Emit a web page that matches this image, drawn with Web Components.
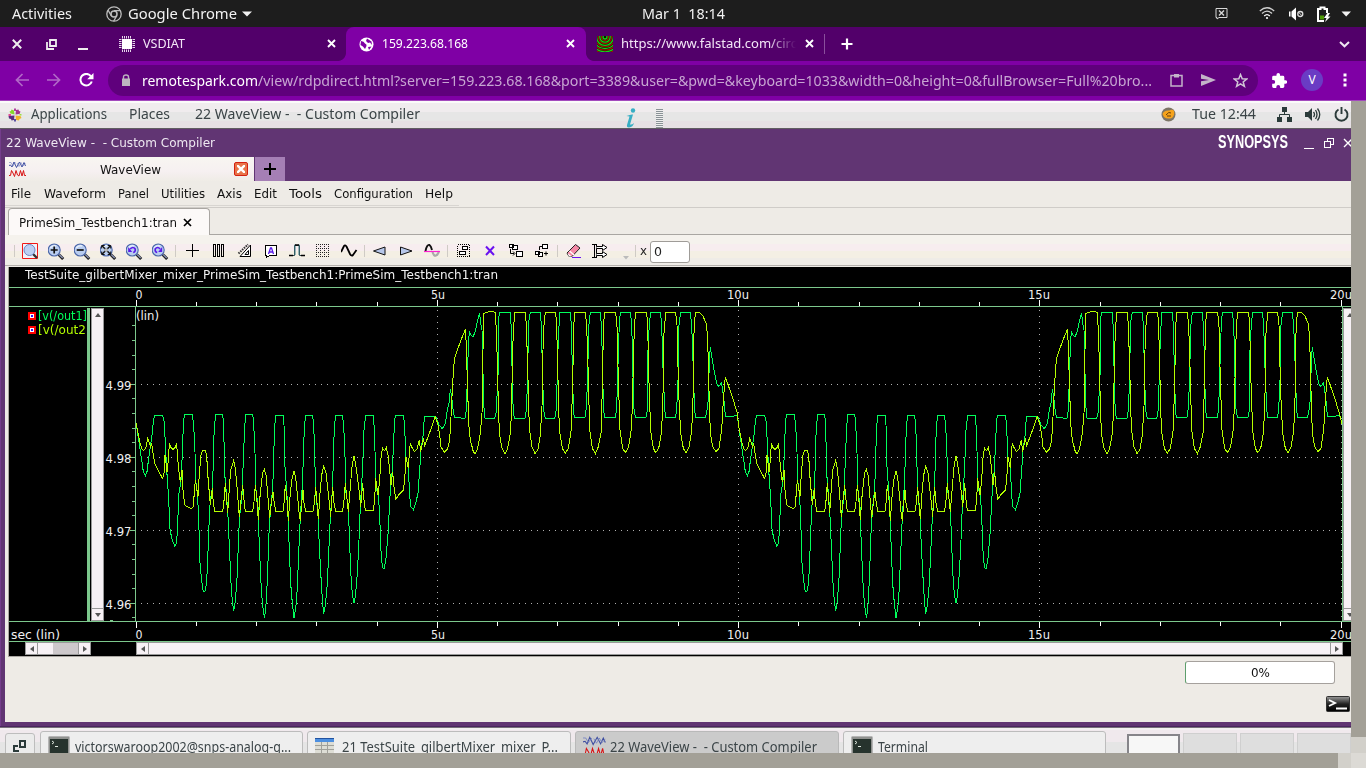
<!DOCTYPE html>
<html lang="en">
<head>
<meta charset="utf-8">
<title>WaveView - Custom Compiler</title>
<style>
html,body{margin:0;padding:0;width:1366px;height:768px;overflow:hidden;background:#a3a097}
body{font-family:"Noto Sans",sans-serif}
</style>
</head>
<body>
<desktop-shell></desktop-shell>
<script>
const define = (name, html, after) => customElements.define(name, class extends HTMLElement {
  connectedCallback() {
    if (this.shadowRoot) return;
    const root = this.attachShadow({mode: 'open'});
    root.innerHTML = '<style>*{box-sizing:border-box}svg{display:block;flex:none}</style>' + (typeof html === 'function' ? html(this) : html);
    if (after) after(this, root);
  }
});

/* Text set to an exact advance width */
define('fit-text', el => `<style>:host{display:inline-block;flex:none;white-space:pre;width:${el.getAttribute('w')}px}
span{display:inline-block;transform-origin:0 50%}</style><span><slot></slot></span>`, (el, root) => {
  const s = root.querySelector('span'), n = s.getBoundingClientRect().width;
  if (n) s.style.transform = `scaleX(${(+el.getAttribute('w') / n).toFixed(4)})`;
});

define('gnome-bar', `<style>
:host{display:flex;height:27px;background:#1d1d1d;color:#f2f2f2;font-size:14.6px;line-height:27px;align-items:center;padding-left:12px}
fit-text{height:27px}
</style>
<fit-text w="60">Activities</fit-text>
<svg width="16" height="16" viewBox="0 0 16 16" style="margin-left:34px" fill="none" stroke="#bdbdbd"><circle cx="8" cy="8" r="7.2" stroke-width="1.3"/><circle cx="8" cy="8" r="3" stroke-width="1.5"/><path d="M8 4.6H14.4M5.2 9.6 2 4M10.8 9.6 7.6 15.2" stroke-width="1.3"/></svg>
<fit-text w="109" style="margin-left:6px">Google Chrome</fit-text>
<svg width="10" height="6" style="margin-left:5px"><path d="M0 .5H10L5 5.5Z" fill="#f2f2f2"/></svg>
<fit-text w="83" style="margin-left:390px">Mar 1  18:14</fit-text>
<svg width="13" height="13" style="margin-left:490px" fill="none" stroke="#d8d8d8"><path d="M1 1.5H12V10.5H4L2 12V10.5H1Z"/><path d="M4 3.5 9 8.500M9 3.500 4 8.500" stroke-width="1.4"/></svg>
<svg width="16" height="13" style="margin-left:31px" fill="none" stroke="#cfcfcf" stroke-width="1.3"><path d="M.8 4Q8-2.500 15.200 4"/><path d="M3 6.500Q8 1.800 13 6.500"/><path d="M5.200 9Q8 6.200 10.800 9" stroke="#fff"/><circle cx="8" cy="11" r="1.100" fill="#fff" stroke="none"/></svg>
<svg width="16" height="14" style="margin-left:14px"><path d="M0 4.500H1.500V9.500H0ZM2.500 4.500 7 .5V13.500L2.500 9.500Z" fill="#fff"/><circle cx="11.300" cy="7" r="2.500" fill="none" stroke="#ddd" stroke-width="1.300"/><path d="m9.500 5.200 3.600 3.600" stroke="#ddd"/></svg>
<svg width="16" height="16" style="margin-left:11px"><path d="M8 15H2V3H4.500V1.500H8.500V3H11V7" fill="none" stroke="#fff" stroke-width="2"/><path d="M4 9.500H8V13.500H4Z" fill="#4e9a06"/><path d="M11.500 7 8 12H10.500L9 16 14.500 10.500H12L14 7Z" fill="#fff"/></svg>
<svg width="10" height="6" style="margin-left:9px"><path d="M.5 .5H10L5.200 5.500Z" fill="#f2f2f2"/></svg>`);

const CLOSE = `<svg width="9" height="9"><path d="M1 1 8 8M8 1 1 8" stroke="#fff" stroke-width="1.900"/></svg>`;
define('chrome-tab', el => `<style>
:host{display:flex;align-items:center;flex:none;height:34px;width:${el.getAttribute('width')}px;padding-left:${el.getAttribute('pad')}px;color:#f3e6f7;font-size:12px;line-height:34px;position:relative}
:host([active]){background:#7f00a5;border-radius:8px 8px 0 0;color:#fff}
:host([active])::before,:host([active])::after{content:"";position:absolute;bottom:0;width:8px;height:8px}
:host([active])::before{left:-8px;background:radial-gradient(circle at 0 0,transparent 7.5px,#7f00a5 8.300px)}
:host([active])::after{right:-8px;background:radial-gradient(circle at 100% 0,transparent 7.5px,#7f00a5 8.300px)}
.x{position:absolute;right:${el.getAttribute('cx')}px;top:12px}
.g{display:flex;width:15px;margin-right:8px;flex:none}
:host([fade]) slot:not([name]){display:block;-webkit-mask-image:linear-gradient(90deg,#000 148px,transparent 176px);mask-image:linear-gradient(90deg,#000 148px,transparent 176px)}
</style><div class="g"><slot name="icon"></slot></div><slot></slot><div class="x">${CLOSE}</div>`);

const chip = () => { let p=''; for(let i=3.5;i<13;i+=2) p+=`M${i} 0V2.500M${i} 13.500V16M0 ${i}H2.500M13.500 ${i}H16`; return p; };
const rings = (a) => { let p=''; for(let r=a;r<20;r+=3.200) p+=`<circle cx="8" cy="1" r="${r}"/>`; return p; };
define('chrome-tabs', `<style>
:host{display:flex;height:34px;background:#52006a;align-items:center}
.ctl{display:flex;width:108px;padding-left:12px;gap:24px;align-items:center}
.ctl :last-child{margin-left:-3px}
.sep{width:1px;height:20px;background:#8a4f9c}
</style>
<div class="ctl"><svg width="10" height="10"><path d="M.8 .8 9.200 9.200M9.200 .8 .8 9.200" stroke="#eee" stroke-width="2"/></svg>
<svg width="11" height="11" fill="none" stroke="#eee" stroke-width="1.800"><path d="M4 1H10V7H4Z"/><path d="M1 3V10H8"/></svg>
<svg width="11" height="11"><path d="M0 9H10V11H0Z" fill="#eee"/></svg></div>
<chrome-tab width="238" pad="11" cx="10"><svg slot="icon" width="16" height="16"><path d="${chip()}" stroke="#e4d5ea" stroke-width="1"/><rect x="3" y="3" width="10" height="10" fill="#fff"/></svg><fit-text w="42" style="margin-left:1px">VSDIAT</fit-text></chrome-tab>
<chrome-tab active width="240" pad="13" cx="11"><svg slot="icon" width="15" height="15" viewBox="0 0 15 15"><circle cx="7.500" cy="7.500" r="7" fill="#fff"/><path d="M2 4Q5 4 6 6.500 8 7 7.500 9L6 12Q4 9 1.500 8ZM8 1.500 7 4 9 6 11 5.500 13 8 12.500 4.500ZM9 10 12.500 9.500 10 13Z" fill="#7f00a5"/></svg><fit-text w="86">159.223.68.168</fit-text></chrome-tab>
<chrome-tab fade width="238" pad="11" cx="10"><svg slot="icon" width="16" height="16"><rect width="16" height="16" fill="#0a1a04"/><g fill="none" stroke="#a01000" stroke-width="1.200">${rings(3.5)}</g><g fill="none" stroke="#16d016" stroke-width="1.300">${rings(2)}</g></svg><fit-text w="176" style="margin-left:1px">https://www.falstad.com/circ</fit-text></chrome-tab>
<div class="sep"></div>
<svg width="12" height="12" style="margin-left:16px"><path d="M6 .5V11.500M.5 6H11.500" stroke="#fff" stroke-width="2.200"/></svg>
<svg width="11" height="7" style="margin-left:486px"><path d="M1 1 5.500 5.300 10 1" fill="none" stroke="#f0e6f3" stroke-width="2"/></svg>`);

define('chrome-toolbar', `<style>
:host{display:flex;height:40px;background:#7f00a5;border-bottom:1px solid #a349bd;align-items:center;padding:0 0 1px 15px}
.omni{display:flex;align-items:center;width:1150px;height:31px;border-radius:16px;background:#5f007c;margin-left:14px;padding-left:13px;font-size:14px;line-height:31px;color:#c7a5d2}
fit-text{height:31px}
.host{color:#fff}
.av{width:22px;height:22px;border-radius:50%;background:#6a3cc4;color:#fff;font-size:12px;line-height:22px;text-align:center;margin-left:14px}
</style>
<svg width="14" height="14" fill="none" stroke="#b168c7" stroke-width="1.700"><path d="M14 7H1.500M7.500 1 1.500 7 7.500 13"/></svg>
<svg width="14" height="14" fill="none" stroke="#b168c7" stroke-width="1.700" style="margin-left:18px"><path d="M0 7H12.500M6.500 1 12.500 7 6.500 13"/></svg>
<svg width="15" height="14" style="margin-left:18px"><path d="M12 3.300A5.800 5.800 0 1 0 12.800 8.500" fill="none" stroke="#fff" stroke-width="2"/><path d="M14.500 0V6.300H8.200Z" fill="#fff"/></svg>
<div class="omni"><svg width="10" height="12"><path d="M1 4.500H9V12H1Z" fill="#bdb5c0"/><path d="M2.500 5V3Q2.500 1 5 1 7.500 1 7.500 3V5" fill="none" stroke="#bdb5c0" stroke-width="1.400"/></svg>
<fit-text w="116" class="host" style="margin-left:11px">remotespark.com</fit-text><fit-text w="894">/view/rdpdirect.html?server=159.223.68.168&amp;port=3389&amp;user=&amp;pwd=&amp;keyboard=1033&amp;width=0&amp;height=0&amp;fullBrowser=Full%20bro...</fit-text>
<svg width="13" height="14" style="margin-left:18px" fill="none" stroke="#c3b3c9" stroke-width="1.500"><path d="M1 2.500H12V13H1Z"/><path d="M4 1H9V4.500H4Z" fill="#c3b3c9" stroke="none"/></svg>
<svg width="15" height="12" style="margin-left:18px"><path d="M0 0 15 6 0 12V7.300L8 6 0 4.700Z" fill="#c3b3c9"/></svg>
<svg width="15" height="15" viewBox="0 0 15 15" style="margin-left:17px"><path d="m7.500 1.500 1.700 4.200 4.500.3-3.500 2.900 1.200 4.400-3.900-2.500-3.900 2.500 1.200-4.400L1.300 6l4.500-.3Z" fill="none" stroke="#d1c5d6" stroke-width="1.500"/></svg></div>
<svg width="15" height="15" viewBox="2 1 20.500 21" style="margin-left:14px"><path d="M20.500 11H19V7a2 2 0 0 0-2-2h-4V3.500a2.500 2.500 0 0 0-5 0V5H4a2 2 0 0 0-2 2v3.800h1.500a2.700 2.700 0 0 1 0 5.400H2V20a2 2 0 0 0 2 2h3.800v-1.500a2.700 2.700 0 0 1 5.400 0V22H17a2 2 0 0 0 2-2v-4h1.500a2.500 2.500 0 0 0 0-5Z" fill="#fff"/></svg>
<div class="av">V</div>
<svg width="4" height="14" style="margin-left:20px" fill="#fff"><rect x=".5" y=".5" width="3" height="3"/><rect x=".5" y="5.500" width="3" height="3"/><rect x=".5" y="10.500" width="3" height="3"/></svg>`);

define('remote-panel', `<style>
:host{display:flex;height:28px;border-bottom:1px solid #615d62;background:linear-gradient(#fbfafa 2px,#f0ecee 2px 11px,#e6e6e6 11px 20px,#e6e0e4 20px);align-items:center;padding-left:8px;color:#3b4447;font-size:14.500px;line-height:24px}
fit-text{height:27px}
.grip{width:7px;height:19px;align-self:flex-end;background:repeating-linear-gradient(#8a9296 0 1px,#eee 1px 2px);margin-left:19px}
</style>
<svg width="14" height="14" viewBox="0 0 14 14" style="margin-right:9px"><path d="M1.500 3.500 3 3 3.500 1.500 6 2.500 6.500 6.500 2.500 5.500Z" fill="#86d52c"/><path d="M8 2 10.500 1.500 11 3 12.500 3.500 11.500 6 7.500 6.500Z" fill="#a3338f"/><path d="M12.500 8 13.500 10 11.500 11 11 12.500 8 12 7.500 7.500Z" fill="#efb22a"/><path d="M.5 8 6.500 7.500 6 12 3.500 12.500 3 11 1 10.500Z" fill="#5a2c80"/><path d="M6 .5H8V3H6Z" fill="#b0409c"/><path d="M.5 6H3V8H.5Z" fill="#e04a90"/><path d="M11.500 6H13.500V7.500H11.500Z" fill="#9be13f"/><path d="M6 11H8V13.500H6Z" fill="#5a50a0"/></svg>
<fit-text w="76">Applications</fit-text><fit-text w="41" style="margin-left:22px">Places</fit-text><fit-text w="225" style="margin-left:25px">22 WaveView -  - Custom Compiler</fit-text>
<svg width="12" height="20" style="margin-left:205px;align-self:flex-end"><circle cx="8" cy="2.500" r="2.200" fill="#37aec4"/><path d="M1.500 8Q6 6 8 6.500L5 16.500Q7 17 9 15 8 19 4 19.500 1.500 19.500 2 17L4.500 8.500Z" fill="#37aec4"/></svg>
<div class="grip"></div>
<svg width="15" height="15" style="margin-left:498px"><circle cx="7.500" cy="7.500" r="7" fill="#7c7466"/><path d="M1.500 7Q3 3 8 3.500 12 2 13 4 14 8 11 11 6 12.500 3 10Z" fill="#f6a31c"/><path d="M5 8Q8 4 10 6M6 9H10" stroke="#69400a" fill="none"/></svg>
<fit-text w="64" style="margin-left:16px">Tue 12:44</fit-text>
<svg width="15" height="15" style="margin-left:21px"><path d="M5 0H10V5H5ZM0 10H5V15H0ZM10 10H15V15H10Z" fill="#2b3b3a"/><path d="M7.500 5V8M2.500 10V7.500H12.500V10" stroke="#2b3b3a" fill="none"/></svg>
<svg width="16" height="15" style="margin-left:13px"><path d="M0 5H3L7 1V14L3 10H0Z" fill="#2b3b3a"/><path d="M8.500 5Q10.500 7.500 8.500 10M10.500 3Q13.500 7.500 10.500 12M12.500 1.500Q17 7.500 12.500 13.500" stroke="#2b3b3a" fill="none" stroke-width="1.300"/></svg>
<svg width="15" height="15" style="margin-left:13px"><path d="M4.500 2.500A6 6 0 1 0 10.500 2.500M7.500 0V7" stroke="#2b3b3a" fill="none" stroke-width="1.900"/></svg>`);

const wv = (w,h,k) => `<svg width="${w}" height="${h}" viewBox="0 0 17 16" preserveAspectRatio="none" fill="none" stroke-width="${k}"><path d="M0 4.500 1.500 4 3 6 5 1 7.500 6.500 10.500 1 13 6 15 1.500 16.500 5" stroke="#3d4da0"/><path d="M0 1.500H2L4 5 6.500 1.500M8 2 10 5.500 12 1.500 14 5 16.500 2.500" stroke="#6d7cc0" stroke-width=".6"/><path d="M0 14.500H1.500L2.500 9.500 4 12 5.500 15.500 7 9.500 8.500 14 10 15 11.500 9.500 13 15 14.500 9.500 15.500 14.500H17" stroke="#d81414"/></svg>`;

define('window-title', `<style>
:host{display:flex;height:28px;color:#eee8f1;font:12.500px/27px "DejaVu Sans",sans-serif;padding-left:1px}
.logo{font:bold 18px/27px "Liberation Sans",sans-serif;color:#fff;margin-left:1003px}
</style><fit-text w="209">22 WaveView -  - Custom Compiler</fit-text>
<fit-text class="logo" w="70">SYNOPSYS</fit-text>
<svg width="48" height="14" style="margin:8px 0 0 16px" fill="none" stroke="#fff" shape-rendering="crispEdges"><path d="M0 11.500H10M20.500 4.500H26.500V10.500H20.500ZM23.500 4V1.500H29.500V7.500H27"/><path d="M40 2 48 10M40 10 48 2" shape-rendering="auto" stroke-width="1.400"/></svg>`);

define('window-tabs', `<style>
:host{display:flex;height:24px;font:12.500px/24px "DejaVu Sans",sans-serif;color:#111}
.tab{display:flex;width:249px;background:linear-gradient(#f8f6f1,#f6f0f1 60%,#efece6);padding-left:4px;align-items:center}
.tab>svg{margin-bottom:1px}
.c{width:14px;height:14px;border:1px solid #d42010;border-radius:2px;background:#e8744a;margin-left:73px;padding:2px}
.plus{width:30px;background:#a57fb5;margin-left:1px;padding:6px 0 0 9px}
</style><div class="tab">${wv(17,16,1)}<fit-text w="61" style="margin-left:74px;position:relative;top:1px">WaveView</fit-text><div class="c"><svg width="8" height="8"><path d="M0 0 8 8M8 0 0 8" stroke="#fff" stroke-width="2.400"/></svg></div></div>
<div class="plus"><svg width="12" height="12"><path d="M6 0V12M0 6H12" stroke="#000" stroke-width="2"/></svg></div>`);

define('menu-bar', `<style>
:host{display:flex;height:27px;border-bottom:1px solid #cfccc8;background:linear-gradient(#d8d5d1,#d8d5d1) 0 24px/454px 1px no-repeat #eeebe6;font:12.500px/25px "DejaVu Sans",sans-serif;color:#111;padding-left:6px}
</style><fit-text w="20">File</fit-text><fit-text w="62" style="margin-left:13px">Waveform</fit-text><fit-text w="31" style="margin-left:12px">Panel</fit-text><fit-text w="44" style="margin-left:12px">Utilities</fit-text><fit-text w="25" style="margin-left:12px">Axis</fit-text><fit-text w="23" style="margin-left:12px">Edit</fit-text><fit-text w="33" style="margin-left:12px">Tools</fit-text><fit-text w="79" style="margin-left:12px">Configuration</fit-text><fit-text w="28" style="margin-left:12px">Help</fit-text>`);

define('document-tabs', `<style>
:host{display:flex;height:27px;background:#eeebe6;padding-left:2.500px}
.t{display:flex;align-items:center;width:202px;height:27px;border:1px solid #a9a6a2;border-bottom:0;border-radius:4px 4px 0 0;background:#fcf9f8;padding-left:10.500px;font:12.500px/27px "DejaVu Sans",sans-serif;color:#111}
.r{flex:1;border-bottom:1px solid #a9a6a2}
</style><div class="t"><fit-text w="158">PrimeSim_Testbench1:tran</fit-text><svg width="9" height="9" style="margin-left:6px"><path d="M1 1 8 8M8 1 1 8" stroke="#000" stroke-width="1.700"/></svg></div><div class="r"></div>`);

const lens = inner => `<g transform="translate(-.8,0)"><path d="m11.500 11.500 4.500 4.500" stroke="#222" stroke-width="3"/><path d="m12 11.500 3.500 3.500" stroke="#8a93b5" stroke-width="1.200"/><circle cx="7" cy="7" r="6" fill="#b9cdf0" stroke="#4a66a8" stroke-width="1.100"/><path d="M3 5Q5 2 9 3" stroke="#e6effc" stroke-width="1.600" fill="none"/>${inner}</g>`;
const dots = () => { let s=''; for(let y=1;y<15;y+=4) s+=`M1 ${y+.5}H15`; for(let x=1;x<16;x+=4) s+=`M${x+.5} 1V14`; return s; };
const I = {
 zoombox: `<path d="M.5 .5H15.500V15.500H.5Z" fill="#f2f2fa" stroke="#f01818"/><path d="m11 11 4 4" stroke="#333" stroke-width="2.400"/><circle cx="7.500" cy="7" r="5.500" fill="#bcd0f4" stroke="#6d86c4"/>`,
 zin: lens('<path d="M7 3.500V10.500M3.500 7H10.500" stroke="#111" stroke-width="1.700"/>'),
 zout: lens('<path d="M3.500 7H10.500" stroke="#111" stroke-width="1.700"/>'),
 zfit: lens('<path d="m3 3 8 8M11 3 3 11" stroke="#111" stroke-width="1.500"/><path d="M2.500 5.500V2.500H5.500M8.500 2.500H11.500V5.500M11.500 8.500V11.500H8.500M5.500 11.500H2.500V8.500" stroke="#111" fill="none" stroke-width="1"/><path d="M5.500 5.500H8.500V8.500H5.500Z" fill="#fff" opacity=".7"/>'),
 zundo: lens('<path d="M5 6Q8 3 10 6 10.500 9 8 9.500" stroke="#5a1ae8" fill="none" stroke-width="1.600"/><path d="M3 4V9H7Z" fill="#5a1ae8"/>'),
 zredo: lens('<path d="M9 6Q6 3 4 6 3.500 9 6 9.500" stroke="#5a1ae8" fill="none" stroke-width="1.600"/><path d="M11 4V9H7Z" fill="#5a1ae8"/>'),
 cross: `<path d="M7.500 1V14M1 7.500H14" stroke="#000" shape-rendering="crispEdges"/>`,
 bars: `<path d="M2.500 1.500H4.500V13.500H2.500ZM6.500 1.500H8.500V13.500H6.500ZM10.500 1.500H12.500V13.500H10.500Z" fill="none" stroke="#000" shape-rendering="crispEdges"/>`,
 meas: `<path d="M3 13.500H13.500V2ZM8 11.500H11.500V7.500Z" fill="#fff" stroke="#000" stroke-width="1"/><path d="M1.500 10.500 11 1.500" stroke="#333" stroke-width="2" stroke-dasharray="1.500 1"/>`,
 label: `<path d="M2.500 2.500H13.500V12.500H7L3.500 14.500V12.500H2.500Z" fill="#fff" stroke="#000" shape-rendering="crispEdges"/><path d="M5.500 11 7.500 5H8.500L10.500 11M6.500 9H9.500" fill="none" stroke="#5a1ae8" stroke-width="1.300"/>`,
 pulse: `<path d="M1 12.500H5.500V2.500H10.500V12.500H15" fill="none" stroke="#2a4348"/><path d="M6 1.500V12M10 1.500V12" stroke="#3c7b84"/><path d="M0 12.500H4M12 12.500H16M6 2H10" stroke="#000" stroke-width="1.300"/>`,
 grid: `<path d="${dots()}" stroke="#222" stroke-dasharray="1 1" shape-rendering="crispEdges"/>`,
 sine: `<path d="M0 9 3 3Q4 1.500 5.500 3.500L9 11Q10.500 13.500 12 12L15.500 7" fill="none" stroke="#000" stroke-width="1.800"/>`,
 prev: `<path d="M1.500 8 13 4V12Z" fill="#b7c7ea" stroke="#111"/>`,
 next: `<path d="M14 8 2.500 4V12Z" fill="#b7c7ea" stroke="#111"/>`,
 zero: `<path d="M1.500 8Q3 1 5.500 2 7 3 8 7" fill="none" stroke="#111" stroke-width="1.900"/><path d="M8.500 9Q10 13.500 12 12.500 14 12 15 8" fill="none" stroke="#aaa" stroke-width="2.200"/><path d="M0 8.500H16" stroke="#ff1fd0" stroke-width="1.200"/>`,
 sel: `<path d="M1.500 1.500H13.500V13.500H1.500Z" fill="none" stroke="#000" stroke-dasharray="1 1" shape-rendering="crispEdges"/><path d="M6.500 3.500H11.500V6.500H6.500ZM3.500 8.500H9.500V11.500H3.500Z" fill="#fff" stroke="#000" shape-rendering="crispEdges"/>`,
 del: `<path d="m4 3.500 8 8.500M12 3.500 4 12" stroke="#6a12f0" stroke-width="2"/>`,
 grp: `<path d="M1.500 1.500H5.500V4.500H1.500ZM4.500 2.500H9.500V6.500H4.500ZM8.500 8.500H14.500V13.500H8.500Z" fill="#fff" stroke="#000" shape-rendering="crispEdges"/><path d="M2.500 6V10.500H6M5 8.500 7 10.500 5 12.500" fill="none" stroke="#000"/>`,
 ungrp: `<path d="M8.500 1.500H13.500V5.500H8.500ZM1.500 8.500H5.500V11.500H1.500ZM4.500 9.500H8.500V13.500H4.500Z" fill="#fff" stroke="#000" shape-rendering="crispEdges"/><path d="M5.500 7V3.500H8M10 10.500H14M12 8.500V12.500" fill="none" stroke="#000"/>`,
 eraser: `<path d="M1 10 9.500 1.500 14 5 6 13.500H3Z" fill="#f589a6" stroke="#222"/><path d="M1.500 10 6 13.500H3Z" fill="#fff"/><path d="m3.500 8 4.500 4" stroke="#fff" stroke-width="1.300"/><path d="M6 14.500H15" stroke="#6a12f0"/>`,
 bus: `<path d="M2.500 1V15M4.500 1V15" stroke="#000" shape-rendering="crispEdges"/><path d="M4.500 3.500H10.500V1.500L15 4.500 10.500 7.500V5.500H4.500M4.500 10.500H10.500V8.500L15 11.500 10.500 14.500V12.500H4.500" fill="#fff" stroke="#000"/><path d="M0 1.500H4M0 14.500H4" stroke="#000"/>`
};
define('tool-icon', el => `<style>:host{display:flex;width:26px;flex:none;justify-content:center;align-items:center}</style><svg width="17" height="17" style="margin-left:1px">${I[el.getAttribute('name')]}</svg>`);

const tools = s => s.split(' ').map(n => n[0]==='|' ? `<i style="margin:0 ${n.slice(1)}px 0 2px"></i>` : `<tool-icon name="${n}"></tool-icon>`).join('');
define('tool-bar', `<style>
:host{display:flex;height:32px;background:linear-gradient(#f5f2ed 9px,#f7edef 9px 16px,#f4efe4 16px 23px,#efece7 23px 30px,#b5b1ad 30px 31px,#eeebe6 31px);padding-left:9px;font:12.500px/32px "DejaVu Sans",sans-serif;color:#222;align-items:center}
i{width:1px;height:12px;background:#cfcbc5;flex:none}
.in{width:40px;height:22px;border:1px solid #9f9c98;border-radius:3px;background:#fff;line-height:20px;padding-left:3px;margin-left:3px;margin-top:1px}
</style><i style="margin:0 2px 0 0"></i>${tools('zoombox zin zout zfit zundo zredo |4 cross bars meas label pulse grid sine |2 prev next zero |3 sel del grp ungrp |3 eraser bus')}
<svg width="8" height="4" style="margin:13px 0 0 9px"><path d="M1 0H7L4 3.500Z" fill="#bbb"/></svg><i style="margin:0 4px 0 5px"></i><fit-text w="7">x</fit-text><div class="in"><fit-text w="8">0</fit-text></div>`);

const TX = [0,60,120,180,241,301,361,421,482,542,602,662,723,783,843,903,964,1024,1084,1144,1205];
const LB = [['0',0,7],['5u',295.5,14],['10u',591.5,22],['15u',892.5,22],['20u',1194.5,22]];
const axis = top => TX.map((x,i) => { const l = i%5 ? 4 : 6; return `<path d="M${x+127.500} ${top?0:18-l}V${top?l:18}"/>`; }).join('');
define('time-axis', el => { const top = el.hasAttribute('bottom'); return `<style>
:host{display:block;border-bottom:1px solid #7cc88c;overflow:hidden;background:#000}
text{font:12.500px "DejaVu Sans",sans-serif;fill:#f0f0f0}
</style><svg width="1342" height="19" stroke="#fff" shape-rendering="crispEdges"><g>${axis(top)}</g><g stroke="none">${LB.map(([t,x,w]) => `<text x="${x+126.500}" y="${top?17:11}" textLength="${w}" lengthAdjust="spacingAndGlyphs">${t}</text>`).join('')}
${top?'<text x="2" y="17" textLength="49" lengthAdjust="spacingAndGlyphs">sec (lin)</text>':''}</g></svg>`; });

/* Traces are sampled in thirds of a pixel: [x origin, points] */
const G = [[0,'409,370 413,400 419,440 425,480 430,515 436,527 441,515 446,475 452,435 456,405 459,375 463,346 488,346 492,362 495,410 498,470 502,540 506,590 509,680 515,715 524,738 530,730 533,670 537,580 543,540 547,460 550,375 553,343 577,343 581,375 585,455 586,530 593,590 597,690 600,790 606,850 610,875 616,873 620,845 624,755 628,650 631,600 638,560 640,470 643,375 648,343 668,343 671,375 674,520 680,590 684,650 688,740 694,870 698,910 701,932 706,905 712,820 716,700 720,640 727,575 730,470 735,370 737,343 758,343 761,370 765,460 767,560 774,620 778,740 784,870 789,925 793,953 797,930 802,840 807,700 812,620 818,570 822,440 825,370 827,346 849,346 852,375 855,500 862,600 866,700 872,850 877,910 882,953 887,925'],
[870,'20,900 25,790 29,690 33,620 38,540 41,430 46,346 67,346 71,370 74,460 77,580 84,640 88,740 94,850 98,910 101,943 106,915 112,850 117,740 121,650 128,560 131,430 136,346 157,346 161,375 165,470 168,580 175,620 179,735 184,850 188,890 192,908 196,890 202,820 207,720 211,620 218,500 222,390 227,346 249,346 252,375 256,480 258,560 265,590 269,640 272,740 277,800 282,808 288,775 295,690 299,600 307,510 312,400 314,360 317,346 340,346 344,375 347,470 355,500 359,590 363,620 370,629 377,610 384,580 389,510 393,450 400,400 403,349 437,349 447,375 457,386 466,370 472,330 477,310 481,268 485,290 488,320 493,352 508,352 514,355 525,355 529,330 532,240 535,140 538,95 544,107 550,109 557,90 563,60 569,40 572,70 576,90 578,170 580,270 583,350 586,355 614,355 618,340 620,310 624,230 626,60 628,37 661,37 664,90 667,250 670,340 674,355 705,355 709,330 712,260'],
[1560,'24,160 27,60 31,37 61,37 64,75 68,240 71,330 76,355 104,355 108,335 110,290 114,150 118,55 120,37 151,37 154,75 158,250 161,340 164,352 195,352 199,325 203,230 206,80 211,37 241,37 245,90 250,310 253,352 286,352 290,325 293,230 296,120 299,55 302,37 331,37 335,70 338,180 341,320 346,352 378,352 382,330 384,150 388,70 392,37 421,37 425,70 428,180 433,300 436,352 466,352 470,330 474,240 477,75 482,37 511,37 515,75 518,150 523,310 526,352 557,352 561,330 565,300 568,180 571,142 577,180 584,220 590,250 596,260 604,248 608,270 613,310 616,349 640,349 652,345']];
const Y = [[0,'409,370 413,395 419,425 425,445 430,451 437,445 443,415 452,440 455,430 460,465 464,490 475,512 488,536 492,520 495,465 501,515 505,480 508,430 513,443 519,449 525,443 529,433 532,455 535,500 541,547 546,510 549,570 554,615 562,620 575,626 579,620 583,580 586,540 594,590 598,520 603,465 607,452 616,452 620,465 623,520 628,580 631,615 637,565 640,610 644,634 668,634 671,615 676,550 683,640 687,580 692,510 697,495 701,482 706,505 711,560 718,650 723,600 728,555 732,600 736,634 758,634 762,605 766,555 770,590 775,660 779,600 785,540 789,515 793,508 798,525 803,580 809,655 814,610 819,575 823,610 828,634 849,634 852,610 856,555 861,600 865,662 870,590 875,540 882,512 887,535 892,580 898,645'],
[870,'31,662 35,610 39,570 42,610 47,634 69,634 73,610 77,560 85,658 90,580 95,525 101,499 108,520 115,580 122,650 128,560 132,610 137,634 158,634 162,600 166,550 175,635 181,560 186,500 192,467 198,500 206,560 212,620 218,550 222,600 226,631 250,631 254,600 257,535 264,585 269,540 274,460 278,445 284,452 289,443 294,465 298,500 303,555 308,515 312,560 317,598 328,582 340,570 344,540 348,470 355,505 358,460 361,428 367,445 374,455 382,445 388,420 392,455 400,415 404,437 418,400 436,350 443,370 449,405 453,440 463,457 473,447 479,420 483,350 487,270 491,200 494,175 504,145 515,115 527,87 530,180 533,270 536,370 541,420 550,455 556,461 563,445 571,400 576,340 579,150 582,40 601,34 616,37 620,110 623,240 628,400 636,445 645,461 653,445 660,405 664,350 668,150 671,75 675,37 706,37 709,75 713,200 717,350'],
[1560,'30,400 36,440 45,461 54,448 61,405 66,320 69,150 72,75 76,37 107,37 110,75 113,200 118,390 127,445 136,460 145,445 153,395 158,260 161,75 165,37 196,37 200,75 204,200 209,390 217,445 226,461 235,440 243,400 248,230 250,75 254,37 287,37 291,80 295,240 300,390 308,445 316,458 326,440 335,380 340,200 343,75 347,37 380,37 383,80 388,290 393,400 400,445 407,458 416,445 425,395 430,250 432,100 437,37 467,37 471,75 476,280 482,400 490,445 498,458 507,440 515,395 520,270 522,100 526,37 538,37 549,48 558,70 563,110 566,240 571,400 578,440 588,455 597,445 605,390 610,300 616,230 628,265 640,300 652,340']];
const trace = a => { const p = a.flatMap(([o,s]) => s.split(' ').map(q => { const [x,y] = q.split(',').map(Number); return [(x+o)/3-104, y/3-7]; }));
  return [...p, ...p.map(([x,y]) => [x+602, y]), [1238,116.500]].map(q => q.map(v => v.toFixed(2)).join()).join(' '); };
define('wave-plot', () => {
  let t='', g=''; const yl = ['4.99','4.98','4.97','4.96'];
  for (let i=-4;i<=16;i++) { const y=Math.floor(77.300+i*14.600)+.5; t+=`M${i%5||i<0?28:26} ${y}H31`; }
  for (let i=0;i<4;i++) g+=`M37 ${77.500+73*i}H1238`;
  [333.500,634.500,935.500,1237.500].forEach(x => g+=`M${x} 3V314`);
  return `<style>:host{display:block;overflow:hidden;background:#000}text{font:12.500px "DejaVu Sans",sans-serif;fill:#f0f0f0}</style>
<svg width="1239" height="314" fill="none" shape-rendering="crispEdges"><path d="${g}" stroke="#b0b0b0" stroke-dasharray="1 5"/>
<path d="M31.500 0V314M1238.500 0V314M6 313.500H9${t}" stroke="#7cc88c"/>
${yl.map((s,i)=>`<text x="1.500" y="${83+73*i}" textLength="26" lengthAdjust="spacingAndGlyphs">${s}</text>`).join('')}
<text x="32" y="13" textLength="23" lengthAdjust="spacingAndGlyphs">(lin)</text>
<polyline points="${trace(G)}" stroke="#00ff5a"/><polyline points="${trace(Y)}" stroke="#b4ff00"/></svg>`; });

define('scroll-v', `<style>:host{display:flex;flex-direction:column;width:13px;height:313px;margin-top:1px;border:1px solid #999;background:#f7f1f5;flex:none}
div{height:12px;display:flex;align-items:center;justify-content:center}div:first-child{border-bottom:1px solid #999}div:last-child{border-top:1px solid #999}span{flex:1}</style>
<div><svg width="6" height="4"><path d="M0 4 3 0 6 4Z" fill="#555"/></svg></div><span></span><div><svg width="6" height="4"><path d="M0 0H6L3 4Z" fill="#555"/></svg></div>`);
define('scroll-h', el => `<style>:host{display:flex;height:13px;width:${el.getAttribute('w')}px;border:1px solid #999;background:#cdc8cb;flex:none}
div{width:12px;display:flex;align-items:center;justify-content:center;background:#f7f1f5}div:first-of-type{border-right:1px solid #999}div:last-child{border-left:1px solid #999}span{width:${el.getAttribute('thumb')}px;background:#f7f1f5}b{flex:1}</style>
<div><svg width="4" height="6"><path d="M4 0V6L0 3Z" fill="#555"/></svg></div><span></span><b></b><div><svg width="4" height="6"><path d="M0 0V6L4 3Z" fill="#555"/></svg></div>`);

define('wave-view', `<style>
:host{display:block;margin-left:3px;border-left:1px solid #aaa5a0;background:#000;height:390px;border-bottom:1px solid #aaa6a2;overflow:hidden;color:#f2f2f2;font:12.500px/16px "DejaVu Sans",sans-serif}
.t{height:21px;border-bottom:1px solid #7cc88c;padding-left:16px}
time-axis{height:19px}
time-axis[bottom]{height:20px}
.m{display:grid;grid-template-columns:78px 3px 1px 13px 1239px 13px;height:315px;border-bottom:1px solid #7cc88c;overflow:hidden}
.s{padding:2px 0 0 19px;overflow:hidden}
.s div{display:flex;height:14px;align-items:center;line-height:14px;gap:2px}
.s u{display:block;width:8px;height:8px;background:#2a1cff;border:2px solid #f00;box-shadow:inset 0 0 0 1px #fff;flex:none}
.b{background:#7cc88c;margin-top:1px}
.h{display:flex;height:14px;padding-left:16px;gap:45px}
</style>
<div class="t"><fit-text w="473">TestSuite_gilbertMixer_mixer_PrimeSim_Testbench1:PrimeSim_Testbench1:tran</fit-text></div>
<time-axis></time-axis>
<div class="m"><div class="s"><div style="color:#00ff5a"><u></u><fit-text w="49">[v(/out1]</fit-text></div><div style="color:#b4ff00"><u></u><fit-text w="48">[v(/out2</fit-text></div></div><div class="b"></div><div></div><scroll-v></scroll-v><wave-plot></wave-plot><scroll-v></scroll-v></div>
<time-axis bottom></time-axis>
<div class="h"><scroll-h w="66" thumb="15"></scroll-h><scroll-h w="1207" thumb="1181"></scroll-h></div>`);

define('status-area', `<style>
:host{display:flex;flex-direction:column;height:65px;background:#eeebe6;align-items:flex-end;padding-right:0;font:12px/22px "DejaVu Sans",sans-serif;color:#111}
.p{width:150px;height:23px;border:1px solid #a5a19d;border-left-color:#5d9e6c;border-radius:3px;background:#fff;margin:4px 16px 0 0;text-align:center}
svg{margin:12px 1px 0 0}
</style><div class="p"><fit-text w="19">0%</fit-text></div>
<svg width="24" height="17"><defs><linearGradient id="g" x2="0" y2="1"><stop offset="0" stop-color="#999"/><stop offset=".5" stop-color="#222"/><stop offset="1" stop-color="#000"/></linearGradient></defs><rect x=".5" y=".5" width="23" height="15" rx="1" fill="url(#g)" stroke="#333"/><path d="M3 4 9 7 3 10M10 12.500H21" stroke="#fff" stroke-width="1.900" fill="none"/></svg>`);

const TERM = `<svg slot="icon" width="22" height="22"><rect x=".5" y=".5" width="21" height="24" rx="1" fill="#8f918e" stroke="#b5b5b5"/><rect x="2" y="3" width="18" height="20" fill="#26332d"/><path d="m4 5 2 1.500-2 1.500M7 10.500H10" stroke="#dfe8df" fill="none"/></svg>`;
define('task-button', el => `<style>
:host{display:flex;flex:none;width:${el.getAttribute('w')}px;height:30px;border:1px solid #bcbcbc;border-radius:3px;background:#eee;padding:4px 0 0 7px;color:#3b4447;font-size:13.500px;line-height:22px}
:host([active]){background:#cbcbcb;border-color:#b9b9b9}
::slotted(fit-text){margin-left:${el.getAttribute('gap')||5}px}
</style><slot name="icon"></slot><slot></slot>`);
define('task-bar', `<style>
:host{display:flex;height:25px;overflow:hidden;background:linear-gradient(#f4f0f2 2px,#f0e9ed 2px 14px,#e5e5e5 14px);padding:3px 0 0 5px}
.d{width:30px;height:26px;border:1px solid #bdbdbd;border-radius:3px;background:#ebebeb;margin:2px 5px 0 0;padding:5px 7px;flex:none}
task-button{margin-right:4px}
.w{flex:none;width:54px;height:26px;border:1px solid #cfcfcf;background:#dedede;margin:2px 3px 0 0}
.w.a{border:2px solid #86858a;background:#f7f7f7;width:53px;margin:3px 3px 0 17px}
</style><div class="d"><svg width="14" height="14" fill="none" stroke="#2b3b3a" stroke-width="2"><path d="M7 2H12V8H7ZM5 7H1V12H6"/></svg></div>
<task-button w="263" gap="5">${TERM}<fit-text w="216">victorswaroop2002@snps-analog-g...</fit-text></task-button>
<task-button w="264" gap="8"><svg slot="icon" width="19" height="18" style="margin-top:2px"><rect width="19" height="18" fill="#ddddd5"/><path d="M0 0H19V4H0Z" fill="#4d8fe0"/><path d="M0 0H19" stroke="#2253a0" stroke-width="2"/><path d="M0 7.500H19M0 11.500H19M0 15.500H19M6.500 4V18M12.500 4V18" stroke="#a0a09a"/></svg><fit-text w="216">21 TestSuite_gilbertMixer_mixer_P...</fit-text></task-button>
<task-button w="264" active gap="4">${wv(23,21,.8).replace('<svg','<svg slot="icon"')}<fit-text w="207">22 WaveView -  - Custom Compiler</fit-text></task-button>
<task-button w="263" gap="5">${TERM}<fit-text w="50">Terminal</fit-text></task-button>
<div class="w a"></div><div class="w"></div><div class="w"></div><div class="w"></div>`);

define('remote-desktop', `<style>
:host{display:grid;grid-template:652px 15px/1351px 15px}
.d{overflow:hidden;width:1351px}
.win{height:599px;padding-left:5px;border-bottom:1px solid #77717a;background:linear-gradient(90deg,#743d8c 1px,#613573 1px)}
.c{background:#eeebe6;width:1346px;overflow:hidden}
.win::after{content:"";display:block;height:1px;margin:4px 0 0 -5px;background:#4b2560}
.v{background:linear-gradient(#a3a097 636px,#d2d0ca 636px)}
.h{background:linear-gradient(90deg,#a3a097 1338px,#d2d0ca 1338px)}
.k{background:#dcdad5}
</style>
<div class="d"><remote-panel></remote-panel><div class="win"><window-title></window-title><window-tabs></window-tabs><div class="c"><menu-bar></menu-bar><document-tabs></document-tabs><tool-bar></tool-bar><wave-view></wave-view><status-area></status-area></div></div><task-bar></task-bar></div>
<div class="v"></div><div class="h"></div><div class="k"></div>`);

define('desktop-shell', `<style>:host{display:flex;flex-direction:column;width:1366px;height:768px;overflow:hidden;font-family:"Noto Sans",sans-serif}</style>
<gnome-bar></gnome-bar><chrome-tabs></chrome-tabs><chrome-toolbar></chrome-toolbar><remote-desktop></remote-desktop>`);
</script>
</body>
</html>
